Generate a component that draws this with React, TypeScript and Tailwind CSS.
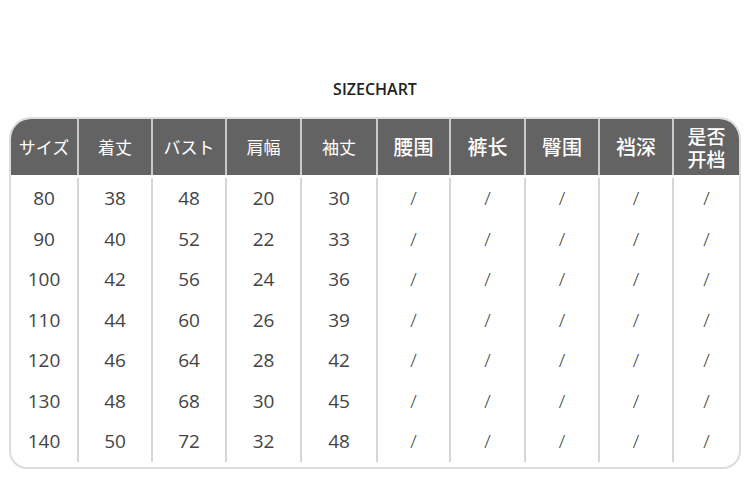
import React from "react";

const jpHeaders = ["サイズ", "着丈", "バスト", "肩幅", "袖丈"];
const cnHeaders = ["腰围", "裤长", "臀围", "裆深"];

const rows = [
  ["80", "38", "48", "20", "30"],
  ["90", "40", "52", "22", "33"],
  ["100", "42", "56", "24", "36"],
  ["110", "44", "60", "26", "39"],
  ["120", "46", "64", "28", "42"],
  ["130", "48", "68", "30", "45"],
  ["140", "50", "72", "32", "48"],
];

const grid = "grid grid-cols-[66px_74px_74px_75px_76px_73px_75px_74px_74px_1fr]";

export default function App() {
  return (
    <div className="w-[750px] h-[484px] bg-white overflow-hidden flex flex-col items-center pt-[78px]">
      <div className="text-[16px] leading-[22px] font-semibold text-[#222] [font-family:'Open_Sans',sans-serif]">
        SIZECHART
      </div>
      <div className="mt-[17px] w-[732px] border-2 border-[#dcdcdc] rounded-t-[22px] rounded-b-[18px] overflow-hidden">
        <div className={`${grid} h-[56px] bg-[#636363] text-white`}>
          {jpHeaders.map((h, i) => (
            <div
              key={h}
              className={`flex items-center justify-center text-[17px] font-normal [font-family:'Noto_Sans_CJK_JP',sans-serif] ${i > 0 ? "border-l-2 border-[#c9c9c9]" : ""}`}
            >
              {h}
            </div>
          ))}
          {cnHeaders.map((h) => (
            <div
              key={h}
              className="flex items-center justify-center border-l-2 border-[#c9c9c9] text-[20px] font-medium [font-family:'Noto_Sans_CJK_SC',sans-serif]"
            >
              {h}
            </div>
          ))}
          <div className="flex items-center justify-center border-l-2 border-[#c9c9c9] text-center text-[19px] leading-[23px] font-medium [font-family:'Noto_Sans_CJK_SC',sans-serif]">
            <span>
              是否
              <br />
              开档
            </span>
          </div>
        </div>
        <div className={`${grid} pt-[3px] pb-[5px]`}>
          {Array.from({ length: 10 }).map((_, c) => (
            <div
              key={c}
              className={`flex flex-col ${c > 0 ? "border-l-2 border-[#d6d6d6]" : ""}`}
            >
              {rows.map((r, ri) => (
                <div
                  key={ri}
                  className="h-[40.5px] flex items-center justify-center text-[19px] text-[#444] [font-family:'Open_Sans',sans-serif]"
                >
                  {c < 5 ? r[c] : <span className="text-[#333] font-light">/</span>}
                </div>
              ))}
            </div>
          ))}
        </div>
      </div>
    </div>
  );
}
